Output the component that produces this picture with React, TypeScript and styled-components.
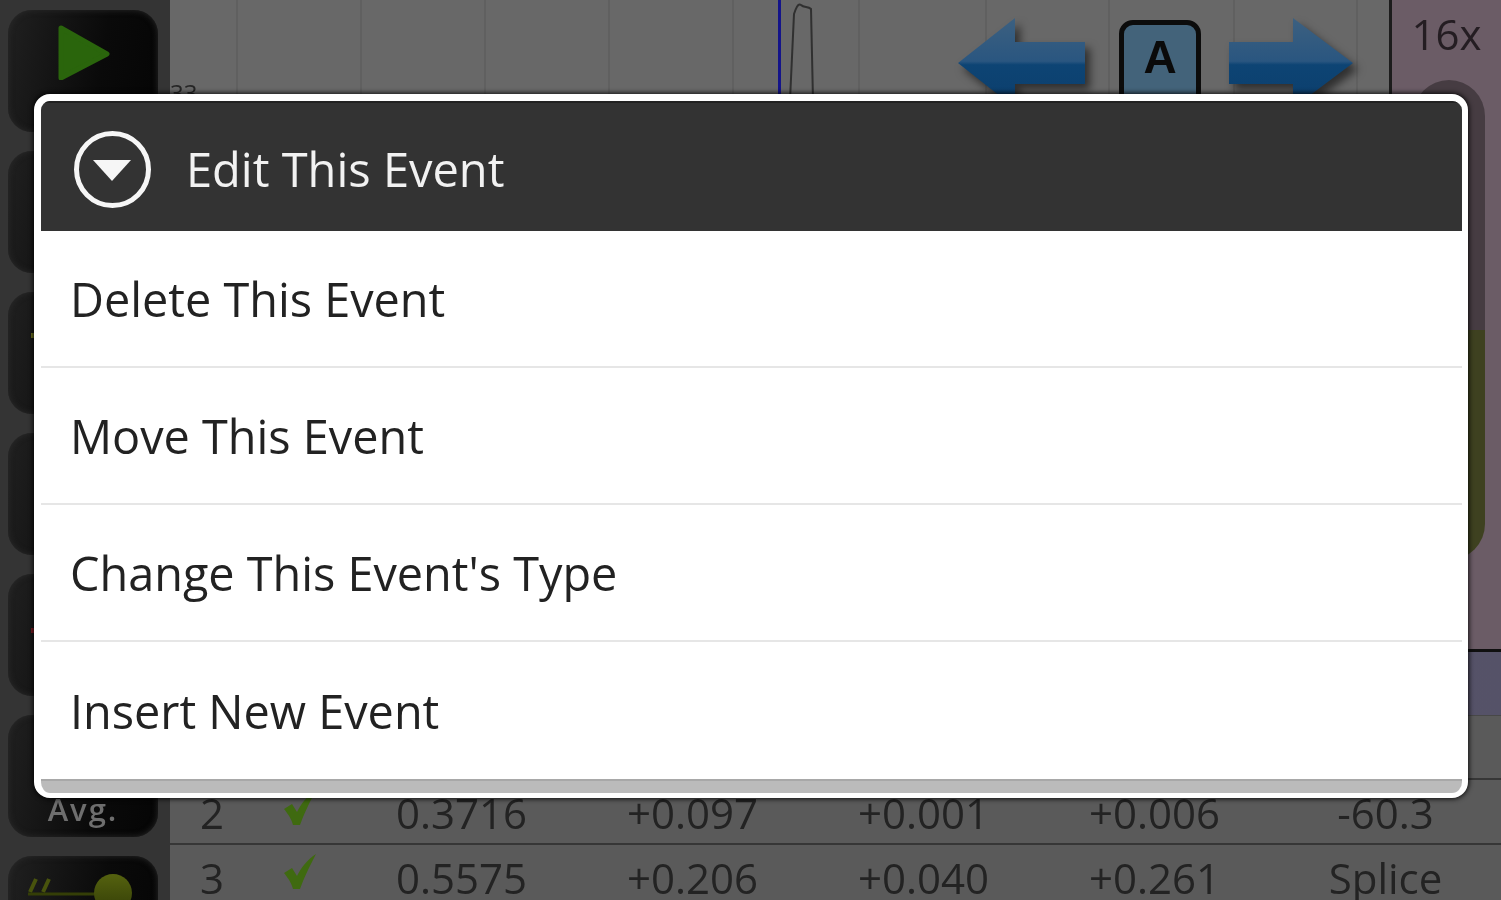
import React from 'react';
import styled, { createGlobalStyle } from 'styled-components';

const GlobalStyle = createGlobalStyle`
  html, body {
    margin: 0;
    padding: 0;
    background: #333;
    font-family: "Open Sans", "Noto Sans", sans-serif;
  }
`;

// the source is an upscaled phone capture, everything is a little soft
const Screen = styled.div`
  position: relative;
  display: flex;
  width: 1501px;
  height: 900px;
  overflow: hidden;
  filter: blur(0.6px);
`;

const Sidebar = styled.div`
  flex: 0 0 170px;
  display: flex;
  flex-direction: column;
  gap: 19px;
  padding: 10px 12px 0 8px;
  box-sizing: border-box;
  background: #343434;
`;

const SideButton = styled.div`
  position: relative;
  flex: 0 0 122px;
  display: flex;
  align-items: flex-end;
  justify-content: center;
  border-radius: 24px;
  background: linear-gradient(100deg, #202020 0%, #0a0a0a 60%, #050505 100%);
  box-shadow: inset 0 0 6px #2a2a2a;
`;

const SideLabel = styled.span`
  font-size: 31px;
  font-weight: 600;
  letter-spacing: 2px;
  line-height: 1;
  color: #6e6e6e;
  padding-bottom: 12px;
`;

const Main = styled.div`
  flex: 1;
  display: flex;
  flex-direction: column;
  min-width: 0;
  background: #5a5a5a;
`;

const TopArea = styled.div`
  flex: 0 0 649px;
  display: flex;
`;

const Chart = styled.div`
  position: relative;
  flex: 1;
  background: #686868;
  border-right: 3px solid #1c1c1c;
  overflow: hidden;
`;

const GridLine = styled.div<{ $x: number }>`
  position: absolute;
  top: 0;
  bottom: 0;
  left: ${({ $x }) => $x}px;
  width: 2px;
  background: #606060;
`;

const TickLabel = styled.span`
  position: absolute;
  left: 0;
  top: 79px;
  font-size: 24px;
  line-height: 1.2;
  color: #262626;
`;

const Cursor = styled.div`
  position: absolute;
  left: 608px;
  top: 0;
  bottom: 0;
  width: 3px;
  background: #14148a;
`;

const Trace = styled.svg`
  position: absolute;
  left: 610px;
  top: 0;
`;

const ArrowIcon = styled.svg<{ $x: number }>`
  position: absolute;
  left: ${({ $x }) => $x}px;
  top: 10px;
  overflow: visible;
  filter: drop-shadow(5px 6px 4px rgba(0, 0, 0, 0.55));
`;

const ModeButton = styled.div`
  position: absolute;
  left: 949px;
  top: 20px;
  width: 82px;
  height: 90px;
  box-sizing: border-box;
  display: flex;
  align-items: flex-start;
  justify-content: center;
  padding-top: 9px;
  border: 5px solid #0c0c0c;
  border-radius: 14px;
  background: #43637a;
  color: #0a0a0a;
  font-family: "Liberation Sans", Arial, sans-serif;
  font-weight: 700;
  font-size: 46px;
  line-height: 1;
`;

const ZoomStrip = styled.div`
  flex: 0 0 109px;
  display: flex;
  flex-direction: column;
  align-items: center;
  background: #6b5c66;
`;

const ZoomLabel = styled.span`
  height: 80px;
  padding-top: 13px;
  box-sizing: border-box;
  font-size: 42px;
  line-height: 1;
  color: #241d22;
`;

const SliderTrack = styled.div`
  width: 72px;
  margin-left: 5px;
  height: 480px;
  border-radius: 36px;
  background: linear-gradient(180deg, #463c42 0%, #463c42 52%, #3e4120 52%, #3e4120 100%);
`;

const Table = styled.div`
  flex: 1;
  display: flex;
  flex-direction: column;
  border-top: 3px solid #101010;
`;

const HeaderRow = styled.div`
  flex: 0 0 63px;
  background: linear-gradient(90deg, #5a5a5a 0%, #555268 100%);
  border-bottom: 1px solid #484848;
`;

const Row = styled.div<{ $height: number }>`
  flex: 0 0 ${({ $height }) => $height}px;
  box-sizing: border-box;
  display: grid;
  grid-template-columns: 84px 92px repeat(5, 231px);
  align-items: center;
  padding-top: 3px;
  background: #5a5a5a;
  border-bottom: 2px solid #363636;
  color: #232323;
  font-size: 42px;
  line-height: 1;
`;

const Cell = styled.span`
  text-align: center;
  white-space: nowrap;
`;

const CheckIcon = styled.svg`
  display: block;
  margin: -11px auto 0;
`;

const Dialog = styled.div`
  position: absolute;
  left: 34px;
  top: 94px;
  width: 1434px;
  height: 704px;
  box-sizing: border-box;
  display: flex;
  flex-direction: column;
  border: 7px solid #fff;
  border-width: 7px 6px 5px 7px;
  border-radius: 16px;
  background: #fff;
  overflow: hidden;
  box-shadow: 0 0 5px 1px rgba(0, 0, 0, 0.85);
`;

const DialogTitle = styled.div`
  flex: 0 0 130px;
  display: flex;
  align-items: center;
  gap: 34px;
  padding: 5px 0 0 32px;
  background: #333;
  border-top: 2px solid #222;
  box-sizing: border-box;
  color: #f2f2f2;
  font-size: 47px;
  line-height: 1;
`;

const MenuItem = styled.div<{ $last?: boolean }>`
  flex: 0 0 137px;
  box-sizing: border-box;
  display: flex;
  align-items: center;
  padding: 2px 0 0 29px;
  color: #222;
  font-size: 46.8px;
  line-height: 1;
  border-bottom: ${({ $last }) => ($last ? 'none' : '2px solid #e6e6e6')};
`;

const DialogFooter = styled.div`
  flex: 1;
  background: #bbb;
  border-top: 2px solid #a8a8a8;
`;

const PlayIcon = styled.svg`
  position: absolute;
  left: 43px;
  top: 0;
`;

const SunIcon = styled.svg`
  position: absolute;
  left: 14px;
  top: 12px;
`;

const SpeckIcon = styled.div<{ $color: string; $y: number }>`
  position: absolute;
  right: 122px;
  top: ${({ $y }) => $y}px;
  width: 5px;
  height: 5px;
  background: ${({ $color }) => $color};
`;

const CheckMark = () => (
  <CheckIcon width="36" height="36" viewBox="0 0 36 36">
    <path d="M2 19 L10 14 L15 22 C19 14 25 6 34 0 C29 10 23 21 18 35 L11 35 C9 28 6 24 2 19 Z" fill="#3f6a10" />
  </CheckIcon>
);

const gridXs = [66, 190, 314, 438, 562, 688, 815, 938, 1063, 1186];

const rows = [
  { id: '2', pos: '0.3716', a: '+0.097', b: '+0.001', c: '+0.006', d: '-60.3', height: 65 },
  { id: '3', pos: '0.5575', a: '+0.206', b: '+0.040', c: '+0.261', d: 'Splice', height: 64 },
];

const menuItems = ['Delete This Event', 'Move This Event', "Change This Event's Type", 'Insert New Event'];

export default function App() {
  return (
    <>
      <GlobalStyle />
      <Screen>
        <Sidebar>
          <SideButton>
            <PlayIcon width="60" height="70" viewBox="0 0 60 70">
              <path d="M10 18 L56 44 L10 68 Z" fill="#2a650c" stroke="#2a650c" strokeWidth="5" strokeLinejoin="round" />
            </PlayIcon>
          </SideButton>
          <SideButton />
          <SideButton>
            <SpeckIcon $color="#6d7020" $y={41} />
          </SideButton>
          <SideButton />
          <SideButton>
            <SpeckIcon $color="#7a1a22" $y={54} />
          </SideButton>
          <SideButton>
            <SideLabel>Avg.</SideLabel>
          </SideButton>
          <SideButton>
            <SunIcon width="120" height="50" viewBox="0 0 120 50">
              <defs>
                <linearGradient id="sunFill" x1="0" y1="0" x2="0" y2="1">
                  <stop offset="0" stopColor="#55620f" />
                  <stop offset="1" stopColor="#343e07" />
                </linearGradient>
              </defs>
              <path d="M8 24 L14 11 M21 24 L27 11" stroke="#48530d" strokeWidth="4" fill="none" />
              <path d="M6 26 H80" stroke="#343e07" strokeWidth="3" fill="none" />
              <circle cx="91" cy="25" r="19" fill="url(#sunFill)" />
            </SunIcon>
          </SideButton>
        </Sidebar>
        <Main>
          <TopArea>
            <Chart>
              {gridXs.map((x) => (
                <GridLine key={x} $x={x} />
              ))}
              <TickLabel>33</TickLabel>
              <Cursor />
              <Trace width="40" height="100" viewBox="0 0 40 100">
                <path d="M10 100 L14 14 C16 8 18 3 21 5 C24 8 28 6 31 9 L33 100" stroke="#303030" strokeWidth="2" fill="none" />
              </Trace>
              <ArrowIcon $x={788} width="128" height="90" viewBox="0 0 128 90">
                <defs>
                  <linearGradient id="arrowFill" x1="0" y1="0" x2="0" y2="1">
                    <stop offset="0" stopColor="#3c6080" />
                    <stop offset="0.48" stopColor="#2a5680" />
                    <stop offset="0.52" stopColor="#0d4474" />
                    <stop offset="1" stopColor="#0c3e6c" />
                  </linearGradient>
                </defs>
                <path d="M0 53 L57 8 V32 H127 V74 H57 V98 Z" fill="url(#arrowFill)" />
              </ArrowIcon>
              <ArrowIcon $x={1059} width="125" height="90" viewBox="0 0 125 90">
                <path d="M124 53 L64 8 V32 H0 V74 H64 V98 Z" fill="url(#arrowFill)" />
              </ArrowIcon>
              <ModeButton>A</ModeButton>
            </Chart>
            <ZoomStrip>
              <ZoomLabel>16x</ZoomLabel>
              <SliderTrack />
            </ZoomStrip>
          </TopArea>
          <Table>
            <HeaderRow />
            <Row $height={64} />
            {rows.map((row) => (
              <Row key={row.id} $height={row.height}>
                <Cell>{row.id}</Cell>
                <Cell>
                  <CheckMark />
                </Cell>
                <Cell>{row.pos}</Cell>
                <Cell>{row.a}</Cell>
                <Cell>{row.b}</Cell>
                <Cell>{row.c}</Cell>
                <Cell>{row.d}</Cell>
              </Row>
            ))}
          </Table>
        </Main>
        <Dialog>
          <DialogTitle>
            <svg width="79" height="79" viewBox="0 0 79 79">
              <circle cx="39.5" cy="39.5" r="36" stroke="#f6f6f6" strokeWidth="5" fill="none" />
              <path d="M20 30 H58 L39 51 Z" fill="#f6f6f6" />
            </svg>
            Edit This Event
          </DialogTitle>
          {menuItems.map((item, i) => (
            <MenuItem key={item} $last={i === menuItems.length - 1}>
              {item}
            </MenuItem>
          ))}
          <DialogFooter />
        </Dialog>
      </Screen>
    </>
  );
}
